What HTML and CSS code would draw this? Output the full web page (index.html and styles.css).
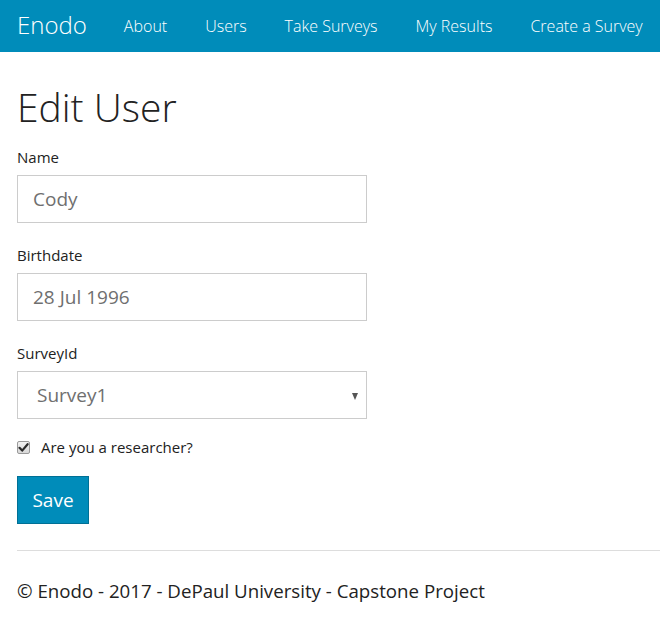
FILE: index.html
```html
<!DOCTYPE html>
<html lang="en">
<head>
<meta charset="utf-8">
<title>Edit User - Enodo</title>
<link rel="stylesheet" href="styles.css">
</head>
<body>
<nav class="navbar">
  <a class="brand" href="#">Enodo</a>
  <ul class="nav">
    <li><a href="#">About</a></li>
    <li><a href="#">Users</a></li>
    <li><a href="#">Take Surveys</a></li>
    <li><a href="#">My Results</a></li>
    <li><a href="#">Create a Survey</a></li>
  </ul>
</nav>
<main class="content">
  <h2 class="title">Edit User</h2>
  <form class="form">
    <div class="group">
      <label class="label" for="name">Name</label>
      <input class="field" id="name" type="text" value="Cody">
    </div>
    <div class="group">
      <label class="label" for="birth">Birthdate</label>
      <input class="field" id="birth" type="text" value="28 Jul 1996">
    </div>
    <div class="group">
      <label class="label" for="survey">SurveyId</label>
      <div class="select-wrap">
        <select class="field select" id="survey">
          <option>Survey1</option>
        </select>
        <span class="caret"></span>
      </div>
    </div>
    <label class="check">
      <span class="box"><svg width="11" height="11" viewBox="0 0 11 11"><path d="M1.5 5.8 L4.2 8.6 L9.6 2.2" fill="none" stroke="#2b2b2b" stroke-width="2.2" stroke-linecap="round" stroke-linejoin="round"/></svg></span>
      <span class="check-text">Are you a researcher?</span>
    </label>
    <button class="btn" type="button">Save</button>
  </form>
  <hr class="rule">
  <footer class="footer">© Enodo - 2017 - DePaul University - Capstone Project</footer>
</main>
</body>
</html>
```

FILE: styles.css
```css
* { box-sizing: border-box; }
html, body { margin: 0; padding: 0; }
body {
  font-family: "Open Sans", "Liberation Sans", sans-serif;
  color: #222222;
  background: #ffffff;
  width: 660px;
  overflow: hidden;
}
.navbar {
  height: 52px;
  background: #008cba;
  display: flex;
  align-items: center;
  padding-left: 17px;
}
.brand {
  color: #ffffff;
  text-decoration: none;
  font-size: 24px;
  font-weight: 300;
  margin-right: 37px;
  line-height: 1;
  margin-top: -2px;
}
.nav {
  list-style: none;
  margin: 0;
  padding: 0;
  display: flex;
  gap: 38px;
}
.nav a {
  color: #ffffff;
  text-decoration: none;
  font-size: 16px;
  font-weight: 300;
  white-space: nowrap;
}
.content {
  padding-left: 17px;
}
.title {
  margin: 33px 0 19px;
  font-size: 39px;
  line-height: 43px;
  font-weight: 300;
  color: #222222;
}
.form { margin: 0; }
.group {
  margin-bottom: 22px;
  width: 350px;
}
.label {
  display: block;
  font-size: 15px;
  line-height: 20px;
  margin-bottom: 8px;
  color: #222222;
}
.field {
  display: block;
  width: 350px;
  height: 48px;
  border: 1px solid #cccccc;
  border-radius: 0;
  padding: 0 15px;
  font-family: "Open Sans", "Liberation Sans", sans-serif;
  font-size: 19px;
  color: #6f6f6f;
  background: #ffffff;
  outline: none;
}
.select-wrap { position: relative; }
.select {
  appearance: none;
  -webkit-appearance: none;
  padding-left: 19px;
}
.caret {
  position: absolute;
  right: 9px;
  top: 22px;
  width: 0;
  height: 0;
  border-left: 3.5px solid transparent;
  border-right: 3.5px solid transparent;
  border-top: 7px solid #555555;
}
.check {
  display: flex;
  align-items: center;
  height: 20px;
  margin-top: -4px;
  font-size: 15px;
  color: #222222;
}
.box {
  width: 13px;
  height: 13px;
  border: 1px solid #9a9a9a;
  border-radius: 2px;
  background: linear-gradient(#f2f2f2, #d8d8d8);
  display: flex;
  align-items: center;
  justify-content: center;
  margin-right: 11px;
}
.box svg { display: block; }
.btn {
  display: block;
  margin-top: 19px;
  height: 48px;
  width: 72px;
  padding: 0;
  border: 1px solid #007095;
  background: #008cba;
  color: #ffffff;
  font-family: "Open Sans", "Liberation Sans", sans-serif;
  font-size: 19px;
  border-radius: 0;
}
.rule {
  margin: 26px 0 0;
  border: 0;
  border-top: 1px solid #dddddd;
}
.footer {
  margin-top: 27px;
  font-size: 18.7px;
  line-height: 26px;
  color: #222222;
}
```
